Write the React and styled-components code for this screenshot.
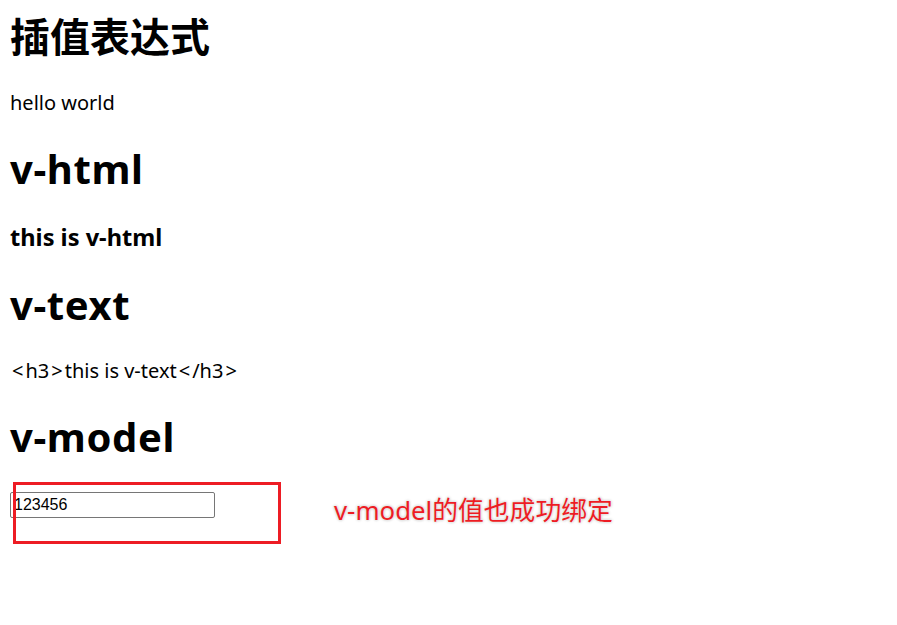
import React from 'react';
import styled, { createGlobalStyle } from 'styled-components';

const GlobalStyle = createGlobalStyle`
  body {
    margin: 0;
    background: #fff;
    color: #000;
    font-family: "Noto Sans", "Noto Sans CJK SC", sans-serif;
  }
`;

const Page = styled.div`
  display: flex;
  flex-direction: column;
  align-items: flex-start;
  gap: 29px;
  padding: 13px 10px 40px;
`;

const Title = styled.h1`
  margin: 0;
  font-size: 40px;
  line-height: 48px;
  font-weight: 700;
  letter-spacing: ${(p) => (p.$latin ? '0.6px' : '0')};
`;

const SubTitle = styled.h3`
  margin: 0;
  font-size: 23.6px;
  line-height: 30px;
  font-weight: 700;
`;

const Text = styled.p`
  margin: 0;
  font-size: 20px;
  line-height: 26px;
`;

const Bracket = styled.span`
  padding: 0 2px;
`;

const InputRow = styled.div`
  position: relative;
  display: flex;
  align-items: flex-start;
  margin-top: 2px;
`;

const TextInput = styled.input`
  box-sizing: border-box;
  width: 205px;
  height: 26px;
  margin: 0;
  padding: 0 3px;
  border: 1px solid #767676;
  border-radius: 2px;
  font-family: "Liberation Sans", Arial, sans-serif;
  font-size: 16px;
  color: #000;
  outline: none;
`;

const Highlight = styled.div`
  position: absolute;
  left: 3px;
  top: -10px;
  width: 268px;
  height: 62px;
  box-sizing: border-box;
  border: 3px solid #ed1c24;
  pointer-events: none;
`;

const Note = styled.span`
  margin-left: 119px;
  margin-top: 1px;
  font-size: 25.8px;
  line-height: 34px;
  color: #ed1c24;
  text-shadow: 0 0 2px #fff, 0 0 3px rgba(0, 0, 0, 0.4);
`;

function App() {
  const [value, setValue] = React.useState('123456');

  return (
    <>
      <GlobalStyle />
      <Page>
        <Title>插值表达式</Title>
        <Text>hello world</Text>
        <Title $latin>v-html</Title>
        <SubTitle>this is v-html</SubTitle>
        <Title $latin>v-text</Title>
        <Text>
          <Bracket>{'<'}</Bracket>h3<Bracket>{'>'}</Bracket>this is v-text
          <Bracket>{'<'}</Bracket>/h3<Bracket>{'>'}</Bracket>
        </Text>
        <Title $latin>v-model</Title>
        <InputRow>
          <TextInput value={value} onChange={(e) => setValue(e.target.value)} />
          <Highlight />
          <Note>v-model的值也成功绑定</Note>
        </InputRow>
      </Page>
    </>
  );
}

export default App;
